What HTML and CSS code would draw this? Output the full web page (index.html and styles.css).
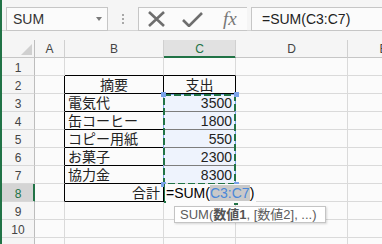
FILE: index.html
```html
<!DOCTYPE html>
<html lang="ja">
<head>
  <meta charset="UTF-8" />
  <title>SUM</title>
  <link rel="stylesheet" href="styles.css">
</head>
<body>
  <div class="app">
    <header class="formula-bar">
      <div class="name-box"><span>SUM</span><span class="drop"></span></div>
      <div class="grip"><i></i><i></i><i></i></div>
      <div class="fx-buttons">
        <svg class="ico-cancel" width="19" height="16" viewBox="0 0 19 16">
          <path d="M2 1 L17 15 M17 1 L2 15" stroke="#6e6e6e" stroke-width="2.6" fill="none"/>
        </svg>
        <svg class="ico-enter" width="22" height="16" viewBox="0 0 22 16">
          <path d="M1 9 L7 15 L20 2" stroke="#6e6e6e" stroke-width="2.6" fill="none"/>
        </svg>
        <span class="fx">fx</span>
      </div>
      <div class="formula-input">=SUM(C3:C7)</div>
    </header>

    <main class="sheet">
      <div class="hd corner"><span class="tri"></span></div>
      <div class="hd col">A</div>
      <div class="hd col">B</div>
      <div class="hd col sel">C</div>
      <div class="hd col">D</div>
      <div class="hd col">E</div>

      <div class="hd row">1</div>
      <div class="c"></div><div class="c bb"></div><div class="c bb"></div><div class="c"></div><div class="c"></div>

      <div class="hd row">2</div>
      <div class="c br"></div>
      <div class="c ctr br bb">摘要</div>
      <div class="c ctr br bb">支出</div>
      <div class="c"></div><div class="c"></div>

      <div class="hd row">3</div>
      <div class="c br"></div>
      <div class="c br bb">電気代</div>
      <div class="c num ref gb">3500</div>
      <div class="c"></div><div class="c"></div>

      <div class="hd row">4</div>
      <div class="c br"></div>
      <div class="c br bb">缶コーヒー</div>
      <div class="c num ref gb">1800</div>
      <div class="c"></div><div class="c"></div>

      <div class="hd row">5</div>
      <div class="c br"></div>
      <div class="c br bb">コピー用紙</div>
      <div class="c num ref gb">550</div>
      <div class="c"></div><div class="c"></div>

      <div class="hd row">6</div>
      <div class="c br"></div>
      <div class="c br bb">お菓子</div>
      <div class="c num ref gb">2300</div>
      <div class="c"></div><div class="c"></div>

      <div class="hd row">7</div>
      <div class="c br"></div>
      <div class="c br bb">協力金</div>
      <div class="c num ref">8300</div>
      <div class="c"></div><div class="c"></div>

      <div class="hd row sel">8</div>
      <div class="c br"></div>
      <div class="c num br bb">合計</div>
      <div class="c active"><span class="editor">=SUM(<span class="hl">C3:C7</span>)</span></div>
      <div class="c"></div><div class="c"></div>

      <div class="hd row">9</div>
      <div class="c"></div><div class="c"></div><div class="c below"></div><div class="c"></div><div class="c"></div>

      <div class="hd row">10</div>
      <div class="c"></div><div class="c"></div><div class="c"></div><div class="c"></div><div class="c"></div>

      <div class="hd row"></div>
      <div class="c"></div><div class="c"></div><div class="c"></div><div class="c"></div><div class="c"></div>
    </main>

    <!-- range marquee over C3:C7 -->
    <svg class="ants" width="382" height="244">
      <rect x="163.5" y="94.5" width="72" height="90" stroke="#7ba3ea" stroke-width="1" fill="none"/>
      <rect x="164" y="95" width="71" height="89" stroke="#217346" stroke-width="2" stroke-dasharray="7 3" fill="none"/>
      <rect x="161" y="92" width="5" height="5" fill="#7ba3ea"/>
      <rect x="234" y="92" width="5" height="5" fill="#7ba3ea"/>
      <rect x="161" y="182" width="5" height="5" fill="#7ba3ea"/>
      <rect x="234" y="182" width="5" height="5" fill="#7ba3ea"/>
      <rect x="234" y="201" width="4" height="4" fill="#217346"/>
    </svg>

    <div class="tip">SUM(<b>数値1</b>, [数値2], ...)</div>
  </div>
</body>
</html>
```

FILE: styles.css
```css
:root {
  --green: #217346;
  --grid: #dadada;
  --head: #f5f5f5;
  --cell: #fbfbfb;
  --text: #222;
}

body {
  margin: 0;
  font-family: 'Liberation Sans', 'Noto Sans CJK JP', sans-serif;
  color: var(--text);
  background: var(--head);
}

.app {
  position: relative;
  width: 382px;
  height: 244px;
  overflow: hidden;
  box-sizing: border-box;
  border-left: 2px solid var(--green);
}

/* formula bar */
.formula-bar {
  display: flex;
  align-items: flex-start;
  height: 31px;
  box-sizing: border-box;
  padding-top: 7px;
  border-bottom: 1px solid #d4d4d4;
  margin-bottom: 9px;
}

.name-box {
  display: flex;
  align-items: center;
  width: 102px;
  height: 24px;
  box-sizing: border-box;
  margin-left: 4px;
  padding-left: 6px;
  border: 1px solid #c6c6c6;
  background: var(--cell);
  font-size: 14px;
  color: #333;
}

.drop {
  margin-left: auto;
  margin-right: 5px;
  border-left: 3px solid transparent;
  border-right: 3px solid transparent;
  border-top: 4px solid #7a7a7a;
}

.grip {
  display: flex;
  flex-direction: column;
  gap: 2px;
  margin: 7px 0 0 14px;
}

.grip i {
  width: 2px;
  height: 2px;
  background: #a8a8a8;
}

.fx-buttons {
  display: flex;
  align-items: center;
  width: 109px;
  height: 24px;
  box-sizing: border-box;
  margin-left: 14px;
  border: 1px solid #c6c6c6;
  border-right: none;
  background: var(--cell);
}

.ico-cancel {
  margin-left: 8px;
}

.ico-enter {
  margin-left: 16px;
}

.fx {
  margin-left: 19px;
  font-family: 'Liberation Serif', serif;
  font-style: italic;
  font-size: 19px;
  line-height: 20px;
  color: #777;
}

.formula-input {
  flex: 1;
  height: 24px;
  box-sizing: border-box;
  margin-left: 4px;
  margin-right: -10px;
  padding: 2px 0 0 10px;
  border: 1px solid #c6c6c6;
  background: var(--cell);
  font-size: 14px;
  line-height: 19px;
  color: #222;
}

/* sheet */
.sheet {
  display: grid;
  grid-template-columns: 33px 30px 99px 72px 112px 72px;
  grid-auto-rows: 18px;
}

.hd {
  box-sizing: border-box;
  border-right: 1px solid #d0d0d0;
  border-bottom: 1px solid #c6c6c6;
  background: var(--head);
  font-size: 12px;
  line-height: 18px;
  color: #444;
  text-align: center;
}

.hd.row {
  padding-top: 1px;
  line-height: 19px;
  border-right-color: #bdbdbd;
  border-bottom-color: #d8d8d8;
}

.corner {
  display: flex;
  justify-content: flex-end;
  align-items: flex-end;
  padding: 0 2px 2px 0;
  border-right-color: #bdbdbd;
}

.tri {
  border-left: 11px solid transparent;
  border-bottom: 11px solid #d0d0d0;
}

.hd.col.sel {
  background: #e1e1e1;
  color: var(--green);
  border-bottom-color: var(--green);
  box-shadow: inset 0 -1px var(--green);
}

.hd.row.sel {
  background: #d4d4d4;
  color: var(--green);
  border-right-color: var(--green);
  box-shadow: inset -1px 0 var(--green);
}

.c {
  box-sizing: border-box;
  border-right: 1px solid var(--grid);
  border-bottom: 1px solid var(--grid);
  background: var(--cell);
  padding: 0 3px;
  font-size: 14px;
  line-height: 19px;
  white-space: nowrap;
  overflow: hidden;
}

.ctr { text-align: center; }
.num { text-align: right; }
.br { border-right-color: #000; }
.bb { border-bottom-color: #000; }
.gb { border-bottom-color: #7d7d7d; }

.ref {
  background: #eef3fd;
}

.active {
  position: relative;
  z-index: 1;
  overflow: visible;
  padding-left: 2px;
  border-bottom-color: var(--green);
  box-shadow: inset 1px 0 var(--green);
}

.below {
  box-shadow: inset 0 1px var(--green);
}

.editor {
  display: inline-block;
  padding-right: 2px;
  background: var(--cell);
  color: #000;
}

.hl {
  background: #c9c9c9;
  color: #4b88d8;
}

/* overlays */
.ants {
  position: absolute;
  left: -2px;
  top: 0;
  pointer-events: none;
}

.tip {
  position: absolute;
  left: 172px;
  top: 206px;
  width: 152px;
  height: 17px;
  box-sizing: border-box;
  padding-left: 5px;
  border: 1px solid #c4c4c4;
  background: #fff;
  box-shadow: 1px 1px 2px rgba(0, 0, 0, 0.15);
  font-size: 13px;
  line-height: 15px;
  color: #5c5c5c;
  white-space: nowrap;
}

.tip b {
  font-weight: 600;
  color: #555;
}
```
